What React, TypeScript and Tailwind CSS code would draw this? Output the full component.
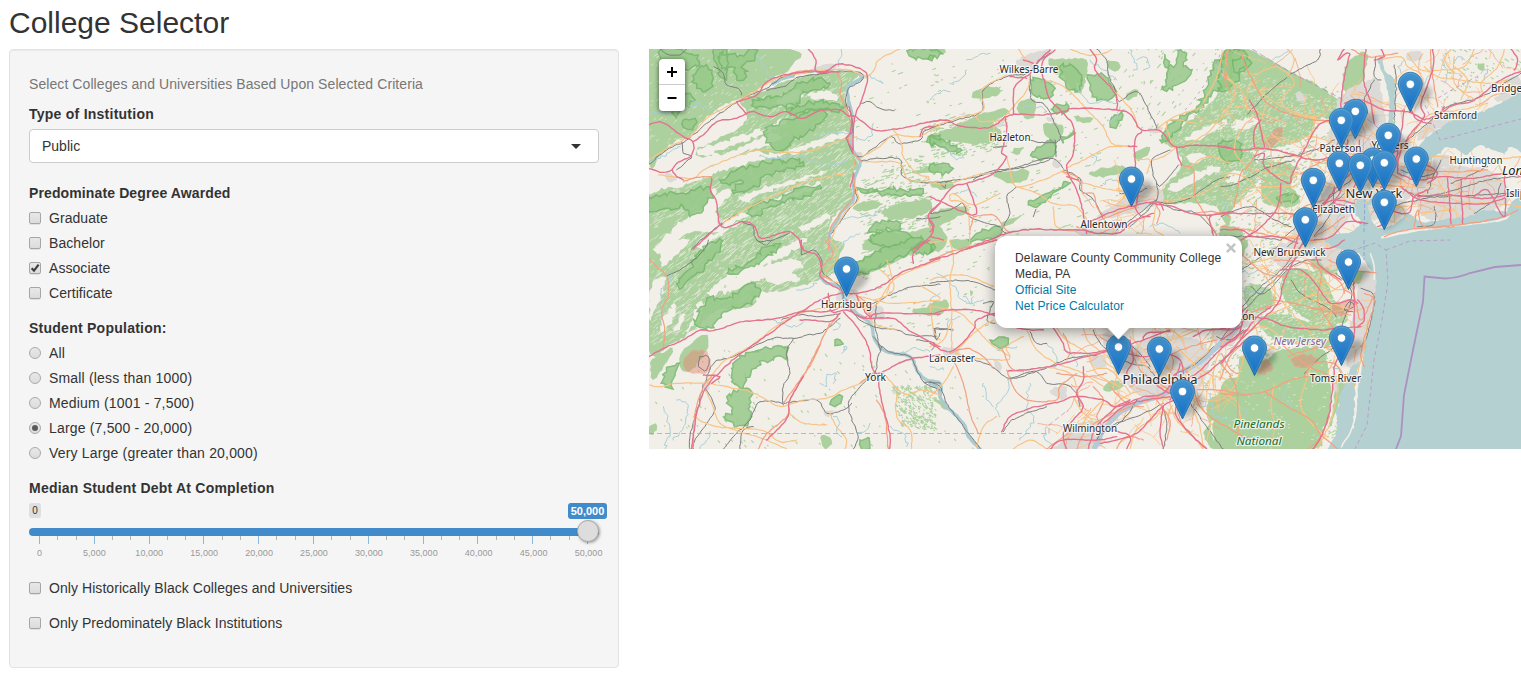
import React from "react";

type Pt = [number, number];
type Tile = {
  x: number;
  y: number;
  forest?: string[];
  clear?: string[];
  park?: string[];
  urban?: string[];
  zone?: string[];
  river?: string[];
  stream?: string[];
  rail?: string[];
  primary?: string[];
  trunk?: string[];
  motorway?: string[];
};

function rng(seed: number) {
  let s = seed >>> 0;
  return () => {
    s = (s * 1664525 + 1013904223) >>> 0;
    return s / 4294967296;
  };
}

const parse = (s: string): Pt[] => s.trim().split(/\s+/).map((q) => q.split(",").map(Number) as Pt);

// Spline through the points with a slight deterministic wobble, for surveyed-looking lines.
function trace(src: string, jitter: number, closed = false) {
  const p = parse(src);
  const n = p.length;
  const rand = rng(Math.round(p[0][0] * 31 + p[0][1] * 17 + n * 101));
  const at = (i: number) => (closed ? p[(i + n) % n] : p[Math.max(0, Math.min(n - 1, i))]);
  let d = `M${p[0][0]},${p[0][1]}`;
  const segs = closed ? n : n - 1;
  for (let i = 0; i < segs; i++) {
    const [a, b, c, e] = [at(i - 1), at(i), at(i + 1), at(i + 2)];
    const len = Math.hypot(c[0] - b[0], c[1] - b[1]);
    const steps = Math.max(1, Math.round(len / 9));
    for (let k = 1; k <= steps; k++) {
      const t = k / steps;
      const f = (j: 0 | 1) =>
        0.5 * (2 * b[j] + (c[j] - a[j]) * t + (2 * a[j] - 5 * b[j] + 4 * c[j] - e[j]) * t * t + (3 * b[j] - a[j] - 3 * c[j] + e[j]) * t * t * t);
      const w = k === steps ? 0 : jitter;
      d += `L${(f(0) + (rand() - 0.5) * w).toFixed(1)},${(f(1) + (rand() - 0.5) * w).toFixed(1)}`;
    }
  }
  return closed ? d + "Z" : d;
}

function inside(x: number, y: number, poly: Pt[]) {
  let hit = false;
  for (let i = 0, j = poly.length - 1; i < poly.length; j = i++) {
    const [xi, yi] = poly[i];
    const [xj, yj] = poly[j];
    if (yi > y !== yj > y && x < ((xj - xi) * (y - yi)) / (yj - yi) + xi) hit = !hit;
  }
  return hit;
}

// Short slanted dashes scattered through an area.
function scatter(area: string, count: number, angle: number, maxLen: number, seed: number) {
  const poly = parse(area);
  const xs = poly.map((q) => q[0]);
  const ys = poly.map((q) => q[1]);
  const [x0, x1, y0, y1] = [Math.min(...xs), Math.max(...xs), Math.min(...ys), Math.max(...ys)];
  const rand = rng(seed);
  const c = Math.cos((angle * Math.PI) / 180);
  const s = Math.sin((angle * Math.PI) / 180);
  let d = "";
  for (let i = 0; i < count; i++) {
    const x = x0 + rand() * (x1 - x0);
    const y = y0 + rand() * (y1 - y0);
    const l = 1.5 + rand() * rand() * maxLen;
    if (inside(x, y, poly)) d += `M${x.toFixed(1)},${y.toFixed(1)}l${(c * l).toFixed(1)},${(s * l).toFixed(1)}`;
  }
  return d;
}

// Meandering local roads around a metropolitan centre.
function streets(cx: number, cy: number, rx: number, ry: number, count: number, seed: number) {
  const rand = rng(seed);
  let d = "";
  for (let i = 0; i < count; i++) {
    const a = rand() * Math.PI * 2;
    const r = Math.sqrt(rand());
    let x = cx + Math.cos(a) * r * rx;
    let y = cy + Math.sin(a) * r * ry;
    let h = rand() * Math.PI * 2;
    d += `M${x.toFixed(1)},${y.toFixed(1)}`;
    const steps = 4 + Math.floor(rand() * 8);
    for (let k = 0; k < steps; k++) {
      h += (rand() - 0.5) * 0.8;
      x += Math.cos(h) * 3.4;
      y += Math.sin(h) * 3.4;
      d += `L${x.toFixed(1)},${y.toFixed(1)}`;
    }
  }
  return d;
}

const tiles: Tile[] = [
  {
    x: 640,
    y: 40,
    forest: [
      "27,27 450,27 450,85 400,115 330,165 300,175 240,200 190,245 150,290 110,300 60,345 27,370",
      "300,185 380,150 450,120 560,98 655,98 620,140 618,200 632,240 630,290 640,330 655,370 632,420 636,480 590,520 565,570 566,632 150,632 170,600 240,545 220,500 230,450 190,440 150,420 180,390 260,350 180,350 170,330 240,290 300,260 320,215",
      "27,470 60,440 110,445 150,430 210,430 200,490 150,540 60,632 27,632",
      "730,510 800,485 870,480 860,520 760,540",
      "640,500 680,485 730,490 690,510 650,512",
      "820,390 900,378 900,392 830,402",
      "680,600 740,570 790,580 900,560 900,632 690,632",
    ],
    clear: [
      "170,300 230,262 300,232 320,240 260,280 200,315",
      "170,330 250,305 380,262 430,235 440,250 360,285 250,330 190,345",
      "200,355 280,330 400,280 420,300 300,340 230,370 150,410 140,395",
      "130,415 210,380 330,335 400,340 500,310 620,275 620,290 480,335 400,352 320,372 220,400 160,425",
      "410,180 470,150 490,165 440,195 420,200",
      "500,165 560,150 600,175 560,180",
      "27,440 90,395 120,425 60,450 27,460",
      "40,630 110,555 190,500 250,450 275,460 240,500 140,580 80,632",
      "200,560 280,530 420,470 540,425 545,435 420,485 300,540 230,575",
      "300,470 400,435 520,405 560,395 480,425 380,455 320,485",
      "170,610 260,565 300,552 230,595 200,625",
      "480,560 560,520 570,530 510,570",
    ],
    park: [
      "60,60 70,27 110,27 140,40 175,45 170,80 110,85 65,80",
      "160,110 190,80 215,100 215,130 195,155 170,145",
      "240,40 300,45 340,27 345,55 310,75 320,110 290,120 275,80 245,85",
      "220,30 250,27 260,100 240,110",
      "340,190 380,170 430,165 480,130 540,115 570,130 540,150 490,155 470,190 400,200 350,205",
      "440,215 500,190 560,185 620,200 600,210 520,212 470,222",
      "370,275 420,245 480,225 540,205 560,225 540,250 500,280 460,300 430,330 400,325 380,300",
      "240,420 290,390 360,370 430,362 490,365 480,380 420,395 370,410 350,440 300,455 275,450 310,425 260,430",
      "27,480 60,470 90,455 130,460 200,440 215,460 190,500 150,530 130,500 90,505 60,510 27,515",
      "320,520 340,495 400,480 460,455 540,435 545,445 490,470 440,480 390,500 350,525",
      "640,445 700,450 760,448 850,453 850,460 740,462 650,452",
      "690,565 720,550 770,542 780,560 735,570 700,575",
      "690,590 740,570 790,575 820,600 810,620 750,622 700,612",
      "800,30 890,28 895,50 850,58 805,42",
      "865,290 900,285 900,310 870,308",
      "85,175 150,160 160,185 120,205 110,235 85,210",
      "130,240 165,235 160,260 130,262",
    ],
    urban: ["520,85 560,72 590,78 570,92 530,98", "75,400 95,402 110,420 85,425", "385,120 400,118 408,132 395,138", "640,340 660,335 668,350 650,362", "232,540 250,538 252,558 238,560", "665,100 690,105 680,118 668,112"],
    river: ["400,130 430,115 460,108", "655,100 665,115 625,140 625,180 637,230 635,320 655,355 660,372 642,420 640,480 610,510 580,560 568,590 572,630"],
    stream: [
      "603,27 600,55 595,80",
      "350,50 375,80 380,100 410,125",
      "150,180 180,195 240,220",
      "27,220 110,210 180,190",
      "690,105 710,120 730,130 720,122",
      "530,290 570,275 620,280 650,240",
      "590,630 630,590 660,580",
      "600,550 640,530 680,530 725,510",
      "360,350 420,355 480,350 560,370 620,360",
      "650,300 690,290 700,250",
      "27,370 80,340 120,320",
    ],
    rail: [
      "27,372 80,330 140,300 200,250 270,200 330,165 380,145 430,110 500,98 560,95 660,97 662,125 625,145 618,190 635,235 635,280 620,290 640,340 668,350",
      "140,27 120,45 80,42 60,27",
      "222,80 250,100 260,135 295,145 305,165",
      "665,190 690,185 720,205 762,212",
      "125,305 130,340 155,350 110,390",
      "668,350 700,325 755,290 775,310 840,300 850,275 900,255",
      "665,362 720,355 780,358 790,410 850,428 870,425",
      "155,627 190,595 240,555 290,522",
      "310,548 340,560 350,600 400,600 450,578",
      "645,360 640,420 650,480 625,510 590,560 575,580",
      "830,535 870,535 900,530",
      "380,150 430,140 480,110 560,100",
    ],
    primary: [
      "120,298 150,290 200,235 280,190 320,168 400,120 450,105 560,90 630,90 680,110 705,85 715,60 780,27",
      "55,405 100,410 160,415 200,385 300,345 360,330 440,338 520,330 600,300 650,290",
      "250,550 330,500 420,460 500,425 620,400 640,403",
      "668,350 720,320 760,285 830,290 900,255",
      "760,270 785,310 790,350 830,400 865,410 850,425 800,415 780,370 720,365 665,365",
      "865,425 900,430",
      "645,360 640,420 655,480 620,510 590,560 572,600",
      "27,360 80,325 130,300",
    ],
    trunk: ["590,95 605,130 600,160 615,200 635,260 625,300 650,350 665,365", "640,400 640,470 600,520 570,570 566,630", "215,410 170,412 130,425", "300,180 330,165", "430,110 470,95 520,90"],
    motorway: [
      "27,255 60,245 95,265 130,290 158,305 155,345 110,370 95,390 60,397 27,385",
      "158,305 190,285 230,245 290,235 335,215 390,230 440,215 485,235 540,212 600,210 625,228 645,228",
      "290,185 300,200 320,222",
      "505,27 528,60 530,95 600,95",
      "290,185 350,165 375,130 420,108 500,95 560,92 600,72 680,100 665,180 648,220 640,270 638,340",
      "645,228 680,255 710,272 780,265 850,250 900,240",
      "627,200 635,230 630,280 618,295 640,330",
      "97,390 110,410 130,420",
      "215,415 212,455 228,480 245,560 310,545 345,560 365,595 440,575 470,590 490,627",
      "160,627 200,590 245,550",
      "840,290 850,265 880,260",
      "900,490 865,525 880,570 860,600 820,627",
      "640,400 632,440",
    ],
  },
  {
    x: 640,
    y: 240,
    forest: [
      "27,0 560,0 600,40 560,110 440,150 360,160 340,195 300,205 230,210 160,270 100,310 27,330",
      "130,330 190,285 205,310 190,350 150,395 120,380",
      "30,370 60,340 100,325 70,380 40,420",
      "560,90 660,60 780,0 880,0 760,70 640,110",
      "27,560 50,555 40,585 27,580",
      "820,205 900,210 900,225 830,220",
      "545,585 575,600 560,627 545,610",
    ],
    clear: [
      "200,160 260,110 380,50 470,0 500,0 430,50 300,110 230,165",
      "60,40 110,0 150,0 100,50 70,80",
      "150,250 175,190 190,195 170,250 130,280",
      "270,120 350,85 440,60 490,80 400,105 330,130 250,160",
      "30,150 60,110 80,115 50,200 30,240",
      "100,270 130,220 140,225 120,270",
      "370,100 440,90 480,120 400,130",
      "60,260 100,190 110,200 80,270",
    ],
    park: [
      "110,130 150,85 175,40 215,5 250,0 240,30 205,60 190,95 150,115 125,145",
      "165,250 200,180 260,175 300,150 345,130 360,160 320,190 260,215 200,270",
      "265,95 330,65 380,20 420,10 410,30 350,70 300,95",
      "620,90 700,40 800,0 850,0 760,60 670,100",
      "815,30 830,15 880,10 880,30 850,45",
      "70,430 80,395 110,370 105,400 90,445",
      "275,385 300,355 340,335 400,320 435,320 440,350 400,360 350,380 320,420 310,445 275,425",
      "260,470 330,450 330,500 325,550 290,560 255,530 275,510",
      "570,490 600,465 605,480 585,500",
      "660,600 690,595 690,627 665,627",
      "585,300 600,300 600,315 585,312",
    ],
    urban: ["600,150 650,150 660,200 620,210 590,180", "680,400 720,395 730,420 690,420", "750,450 770,455 760,465", "190,430 205,420 210,445 195,450", "685,205 730,205 730,240 690,235", "550,515 580,510 575,525 555,527"],
    zone: ["130,370 150,340 200,335 210,370 200,395 160,400 140,390"],
    river: ["540,110 560,130 600,140 615,180 650,220 690,250 705,300 740,335 810,350 830,390 860,420 900,430 900,470"],
    stream: [
      "60,240 70,190 60,160 90,120 80,100",
      "70,500 90,560 80,600 75,627",
      "110,480 140,490 130,560 100,600",
      "540,430 560,440 560,410 590,400 580,430",
      "210,575 200,600 180,627",
      "400,240 470,260 490,245",
      "780,340 830,325 870,335",
      "580,240 600,260 580,270",
      "750,560 790,580 800,620",
      "470,150 500,145 530,130",
      "610,330 620,320 605,340",
      "580,530 600,550 590,570 605,590",
      "690,550 680,570 650,575",
    ],
    rail: [
      "80,108 120,90 160,60 195,25 205,0",
      "350,0 380,15 395,0",
      "485,0 485,45 520,30 545,60 550,100 600,140 610,180",
      "195,430 205,400 225,365 280,350 330,325 400,295 460,295 500,285 540,280 570,260 600,235",
      "460,295 440,340 450,400 430,440 430,495",
      "425,240 480,225 540,230 600,220",
      "620,190 650,230 700,260 770,270 810,285 890,290",
      "660,200 700,190 760,160 820,140 900,133",
      "710,190 705,250 712,290 720,330",
      "700,290 745,335 810,350 830,390 855,430 900,450",
      "725,320 710,370 705,400 660,440 625,490 640,550 655,590 640,627",
      "195,445 225,500 200,550 165,600 160,627",
      "430,490 360,485 330,540 280,590 250,627",
      "430,490 530,480 560,520 610,510 635,490",
      "875,330 885,310 830,300",
      "190,430 175,500 150,590 150,627",
      "300,627 310,570 340,560",
      "180,350 205,350 200,390 175,380 180,350",
      "900,430 850,425",
      "885,270 890,300 900,280",
    ],
    primary: [
      "27,435 60,440 110,430 190,430 230,435 330,455 380,480 425,500 490,480 560,475 610,450 660,430 690,405",
      "200,430 250,365 330,320 400,265 480,220 580,200",
      "195,450 215,490 240,550 300,575 380,600 440,627",
      "620,200 700,200 760,120 830,85 900,60",
      "740,60 760,150 700,180",
      "660,170 760,190 900,180",
      "840,135 880,160 900,175",
      "450,520 490,550 560,555",
      "730,400 790,460 850,450 900,465",
      "770,460 770,530 810,570 815,627",
      "160,530 230,560 360,570 420,605 470,600",
      "570,520 590,560 620,600 615,627",
      "870,190 880,270 900,300",
      "650,170 690,210 700,250 770,270",
      "720,90 750,120 740,160",
      "570,0 590,30 590,60 560,90 560,115 600,130",
    ],
    trunk: [
      "27,55 50,80 80,108 85,170 65,210 75,280 70,330",
      "555,0 580,40 555,70 540,100 575,120",
      "600,220 555,280 520,360 480,420 430,490",
      "215,410 190,440 165,520 160,600 155,627",
      "355,627 380,580 440,530 450,480 490,410 510,370 570,250",
      "710,480 735,530 745,627",
      "660,430 700,400",
      "640,160 680,190 690,240",
    ],
    motorway: [
      "27,350 70,325 120,305 180,270 220,272 310,245 400,237 480,215 540,180 600,160 650,160 720,140 780,100 860,70 900,55",
      "160,590 170,520 200,440 250,385 310,335 390,280 430,250 490,215 560,215 610,200",
      "480,0 490,30 530,45 545,85 540,110 600,150",
      "610,215 650,260 685,320 695,380 710,400 740,390 800,360 900,345",
      "620,180 640,220 680,235 760,235 800,265 850,295 900,320",
      "600,220 570,245 510,240 480,240",
      "715,410 720,460 735,520 750,590 748,627",
      "650,165 665,200 690,230 720,220 900,222",
      "820,70 820,40 860,5 870,0",
      "380,600 440,535 450,480 490,410",
      "155,627 160,590",
      "565,160 575,215 620,210 660,230 680,230",
      "190,405 240,410 215,430",
    ],
  },
  {
    x: 930,
    y: 40,
    forest: [
      "0,30 45,28 40,42 0,38",
      "0,285 70,260 150,225 225,205 230,225 190,245 215,280 180,310 110,310 40,300 0,305",
      "355,60 400,55 470,60 470,105 450,160 420,140 400,105 370,100",
      "700,300 780,240 850,180 900,130 900,540 860,500 790,490 700,490 690,460 740,400 755,370 740,330",
      "0,520 90,500 110,515 40,550 0,560",
      "480,395 575,375 575,400 500,412",
      "265,190 315,180 310,235 270,225",
      "140,150 200,140 205,165 130,175",
      "610,340 650,320 660,330 625,365",
      "0,430 55,420 75,440 30,450",
      "430,230 490,235 460,250",
      "535,60 570,75 555,95 535,85",
      "280,320 260,345 240,335",
      "345,250 400,260 380,310 350,290",
      "190,400 290,390 290,420 240,430",
      "590,160 625,150 620,170 590,180",
      "200,560 280,520 250,550",
    ],
    clear: ["720,440 790,400 850,380 870,390 800,420 730,455", "760,300 830,260 890,240 880,260 800,300", "760,350 800,340 830,350 790,370"],
    park: [
      "480,105 510,102 540,130 560,155 545,175 500,172 480,150",
      "300,120 360,130 370,165 340,175 310,165",
      "690,300 740,240 800,200 850,90 880,40 900,35 900,130 850,150 820,190 770,240 720,300",
      "300,345 340,315 370,305 375,335 350,355 310,352",
      "390,80 420,75 455,105 450,150 420,150 400,120",
      "0,290 40,300 90,325 80,340 40,320 0,310",
      "295,495 340,465 410,425 420,430 360,470 310,500",
      "115,600 140,580 215,565 200,590 120,608",
      "540,245 575,215 575,240 545,262",
      "705,45 715,80 740,70 740,30 770,40 760,80 780,90 750,130 700,150 710,100",
      "370,205 410,190 415,212 380,222",
      "0,45 12,48 5,62 0,60",
      "395,300 430,275 420,290 400,310",
      "875,330 900,315 900,345 880,350",
      "0,375 60,380 55,400 0,395",
    ],
    urban: [
      "260,60 310,40 370,30 330,65 300,90 260,110",
      "195,245 225,240 215,260 200,262",
      "610,450 680,440 700,480 640,510 560,530 500,530 560,490",
      "450,560 540,550 560,585 450,585",
      "85,225 105,215 100,228",
      "370,360 390,365 385,385 370,380",
      "350,230 375,232 370,245 355,245",
      "655,265 700,262 690,278 660,278",
    ],
    stream: [
      "110,60 160,40 180,40",
      "0,180 40,150 60,155",
      "280,205 330,200 350,215",
      "570,200 560,230 540,250",
      "440,130 480,190 520,180 560,190",
      "620,60 640,50 660,80 640,90",
      "480,340 500,350 490,375",
      "660,560 700,550 750,580",
      "60,330 80,360 110,330",
      "480,60 520,90 560,120",
      "860,80 880,100 860,120",
      "600,30 620,70 610,90",
      "520,430 560,420 580,440",
      "90,460 120,450 140,470",
      "230,310 250,300",
      "60,130 90,120 110,90",
    ],
    rail: [
      "0,265 80,240 155,215 160,150 230,110 290,100 330,60 360,40",
      "500,27 530,60 535,105 555,150 568,185 620,155 660,220 680,265",
      "0,430 80,420 160,405 250,385 360,355 400,385",
      "300,100 305,180 340,190 370,240 390,300 330,308 290,295",
      "375,300 378,350",
      "260,440 230,470 240,520 215,570 230,580",
      "0,520 60,510 100,490 120,530 210,560",
      "400,390 450,415 450,450 490,480 525,545",
      "670,485 720,490 780,475 850,425 900,410",
      "745,375 700,430 680,430 665,360 720,330",
      "680,430 680,480 600,560",
      "130,420 180,395 290,380 360,358",
      "30,430 45,445 50,425",
      "310,530 318,508",
      "690,490 740,510 800,520 850,570 860,585",
      "560,570 600,540 680,480",
      "570,460 620,460 650,445",
      "190,322 230,318",
    ],
    primary: [
      "0,262 80,235 160,210 155,150 230,105",
      "265,27 290,60 310,80",
      "340,120 380,130 420,155 480,220 520,260 545,310 600,320 540,320 480,350 410,385",
      "420,27 470,45 520,40 545,27",
      "530,130 570,170 610,220 620,260",
      "300,100 290,150 250,200 225,230",
      "0,430 60,430 140,405 180,400",
      "230,350 240,390 260,440 340,420 400,390",
      "260,440 320,460 370,490 440,500 470,540",
      "395,395 440,420 500,440 580,455",
      "565,490 590,455 560,420",
      "730,320 710,250 760,220 820,200",
      "665,360 700,350 740,320",
      "620,360 660,360 650,400",
      "770,390 830,350 900,370",
      "660,490 720,480 790,470 850,440 900,400",
      "120,627 110,500 60,480 70,460 130,495 210,460",
      "680,270 720,240 800,250",
      "370,500 380,560 440,575",
      "190,240 195,290 230,300",
      "545,580 560,550 570,510 600,500",
      "760,320 830,280 870,235 900,225",
      "560,445 600,470 610,490 570,500",
      "140,225 150,245 230,238",
      "820,190 860,110 880,35",
      "680,490 670,560 700,585",
      "50,600 0,610",
    ],
    trunk: [
      "130,530 190,525 220,560 240,580",
      "750,375 790,390 795,470 830,530 860,585",
      "890,35 885,120 900,150",
      "455,420 460,460 490,460 500,500 525,530",
      "400,395 440,410 450,430",
      "500,545 560,520 620,500",
      "130,530 120,570",
      "440,560 500,580 560,560",
      "790,520 850,515 900,530",
      "0,560 10,575 0,590",
      "675,490 690,520 680,550",
    ],
    motorway: [
      "0,245 50,240 90,258 180,262 240,225 330,225 395,215 440,205 560,210 600,222 635,270 690,272 735,320 800,315 900,322",
      "375,30 340,60 335,95 350,150 360,180 395,215 430,260 430,340 410,385 440,450 460,520 470,580",
      "360,30 320,70 300,100 255,140 250,220",
      "480,27 500,60 495,90 555,160 560,210",
      "635,275 615,300 615,360 625,430 620,490",
      "225,230 230,280 215,340 230,350 190,400 110,430 70,440 20,500 0,520",
      "0,590 40,600",
      "740,320 745,355 755,375",
      "410,410 445,420",
      "660,490 730,500 780,520 840,525 900,515",
      "480,545 560,510 620,495 660,487 690,487",
      "110,430 130,480 130,525 0,470",
      "110,627 230,580 310,568 380,570 460,570 500,580 570,578 600,550 670,520",
      "280,60 310,70",
      "240,110 290,115",
      "615,500 630,525 660,530",
      "690,490 700,510",
      "0,540 12,560 0,575",
      "850,585 840,530 890,520",
      "595,318 620,320",
    ],
  },
  {
    x: 930,
    y: 240,
    forest: [
      "60,0 120,0 110,25 70,25",
      "0,190 50,180 50,210 0,225",
      "830,500 850,470 940,450 960,460 960,627 900,627 850,600 840,550",
      "10,480 50,490 50,510",
      "545,420 580,430 560,450 520,450",
      "860,540 820,580 850,627 900,627",
      "120,150 130,155 122,168",
    ],
    park: ["0,15 12,10 8,32 0,38", "180,300 235,295 235,312 200,318"],
    urban: [
      "640,300 760,290 830,320 830,400 780,470 700,480 640,470 590,430 580,360",
      "520,280 570,300 580,350 540,370",
      "40,320 85,330 80,360 45,355",
      "420,560 510,545 500,627 370,627 400,600",
      "360,450 410,440 400,480",
      "190,360 215,375 205,400",
      "480,350 520,345 530,380 490,380",
      "850,270 930,260 920,300 860,310",
    ],
    river: ["0,430 20,440 35,480 60,510 100,550 115,590 150,627"],
    stream: [
      "240,410 230,460 200,500 210,530",
      "160,430 170,480 190,500",
      "350,310 380,350 370,380",
      "20,100 60,130 110,190 130,170",
      "50,270 60,240 90,230",
      "300,430 290,500 310,540 270,600",
      "400,330 430,350 440,380",
      "550,280 560,320",
      "100,170 130,190 160,180",
      "0,380 40,390",
      "840,460 850,520 900,540",
      "0,180 30,160",
      "350,560 345,600 380,610",
      "790,480 820,500 840,490",
      "200,330 260,320",
    ],
    rail: [
      "0,130 60,122 130,125 195,150",
      "10,265 70,270 15,265 20,300",
      "135,360 180,375 240,415 330,390 420,355 500,345",
      "240,415 320,395 350,430 410,435 440,460 450,500",
      "0,425 30,440 50,490 100,560 150,625",
      "220,575 240,545 280,525 350,500",
      "160,190 190,185 170,240 195,250",
      "300,275 320,310 350,310",
      "490,270 520,320 600,370 650,380 690,430",
      "700,490 640,520 540,560 500,600",
      "780,490 830,560 880,627",
      "700,500 710,560 700,627",
      "570,290 620,330 660,380",
      "850,320 800,370 740,400",
      "620,480 580,540 520,580",
      "940,270 900,300 860,290",
    ],
    primary: [
      "60,0 70,60 60,120 65,230 65,330",
      "0,120 60,105 120,110 190,140",
      "75,340 130,280 190,240",
      "0,320 40,300 65,240",
      "75,340 140,355 220,360 240,350 180,310 90,220 0,200",
      "0,470 40,430 70,380",
      "140,620 160,560 200,530",
      "290,270 320,330 380,370 460,400 520,440",
      "380,265 410,300 470,340 500,400 570,440",
      "460,265 480,310 550,360",
      "470,395 530,385 570,420 600,460",
      "520,480 480,520 450,560 400,600",
      "240,345 230,320 280,290",
      "640,300 620,340 660,390 700,400",
      "600,290 650,340 700,380 760,390",
      "720,490 740,540 790,590 820,627",
      "660,300 720,300 800,270",
      "810,400 820,450 790,500 810,560 820,627",
      "740,320 780,360 830,400 900,420",
      "850,290 830,340 790,370 760,430",
      "900,270 870,330 850,400 850,450",
      "530,550 570,480 640,450",
      "520,360 560,400 550,450 600,480",
      "430,470 460,520 500,540",
      "700,260 750,290 770,340",
      "640,490 680,470 720,480",
      "600,627 620,570 680,530 700,480",
      "350,380 420,400 440,440",
      "800,490 840,540 830,600",
      "250,627 300,600 350,627",
    ],
    trunk: [
      "70,360 100,430 120,520 145,580",
      "0,60 80,30 200,0",
      "230,390 250,440 290,480 380,480 390,440 440,400",
      "215,320 240,380 280,395",
      "600,330 640,400 700,440 740,470",
      "640,360 700,350 780,320 860,300",
      "800,450 860,450 960,465",
      "760,380 790,430 800,480 840,530 960,600",
      "400,280 420,330 410,360",
      "380,400 470,410 530,400",
      "540,440 590,490 640,500",
      "700,300 730,360 720,400",
      "350,627 400,590 440,560",
      "440,627 470,570 530,530 600,500",
      "740,500 760,560 830,627",
      "870,420 900,350 950,300",
      "600,440 660,420 720,450",
      "510,290 550,310 600,300",
      "490,440 520,480 500,530 520,560",
      "680,480 720,540 710,600",
      "190,385 160,350 110,325 60,340",
      "560,627 590,590 640,600",
    ],
    motorway: [
      "0,60 60,45 130,20 200,0",
      "0,222 60,210 130,210 190,225 270,265 340,270",
      "0,310 50,335 85,320 130,270 140,240 195,220",
      "235,393 320,385 400,370 470,350 560,325 640,300 720,270",
      "215,575 240,530 300,505 390,485 440,470 520,480 560,500 640,470 700,460 740,400",
      "370,265 400,310 410,335 470,340 540,330",
      "600,300 610,360 590,400 620,430",
      "460,380 460,420 440,460 460,500 430,540 400,580 410,627",
      "510,610 560,600 620,580 660,540 710,490 760,480",
      "740,480 740,530 790,590 830,627",
      "720,480 750,430 800,400 850,350 890,310 950,270",
      "510,560 580,500 650,480 720,470",
      "640,400 700,450 720,460",
      "720,440 770,430 830,400 900,340 960,290",
      "475,627 500,560 560,500 600,480",
      "590,340 640,350 700,340 750,360 760,400",
      "550,570 600,590 590,627",
      "790,290 830,270 900,270",
      "700,500 690,570 700,627",
      "360,627 400,600 500,600 560,590",
      "750,370 740,400 700,430",
      "640,300 650,280 720,275",
    ],
  },
  {
    x: 1221,
    y: 40,
    forest: [
      "0,50 80,27 110,40 200,90 280,130 340,170 360,190 340,230 290,240 260,290 180,320 100,330 0,300",
      "365,120 385,60 430,35 440,60 420,130 380,160",
      "0,320 60,330 100,345 110,420 60,480 20,520 0,520",
      "110,370 180,360 220,380 210,440 240,470 210,500 130,490 120,430",
      "510,270 520,240 530,290 515,330",
      "735,310 760,320 750,330 735,325",
      "0,560 60,570 50,627 0,627",
      "800,310 820,310 815,325",
      "770,70 790,70 790,90 775,90",
    ],
    clear: ["30,250 90,230 120,240 90,260 40,270", "140,350 200,340 220,350 160,365", "20,400 60,390 60,420 20,430"],
    park: [
      "0,60 40,27 85,60 70,90 40,130 0,155",
      "170,470 220,460 222,485 180,490",
      "0,310 50,305 60,345 20,370 0,350",
      "35,70 60,50 75,75 50,105",
    ],
    urban: [
      "360,170 420,130 470,120 490,210 500,260 540,280 560,320 590,360 590,440 540,500 490,530 440,540 430,480 380,540 330,590 250,620 200,600 250,540 300,470 330,400 320,300 340,230",
      "590,400 680,380 800,390 860,440 860,490 760,530 640,540 590,500",
      "630,240 700,215 690,255 650,265 600,300 590,290",
      "820,180 900,120 900,170",
      "640,350 700,350 690,380 640,380",
      "560,40 600,35 600,60 565,62",
      "225,160 260,170 250,185 228,180",
      "850,120 890,110 895,140",
    ],
    zone: ["135,310 160,270 185,262 180,290 145,325"],
    stream: [
      "155,60 190,40 200,27",
      "20,330 40,300 60,290",
      "190,200 200,230 180,250",
      "380,470 360,520 340,560",
      "660,60 680,100 670,130",
      "700,70 710,50 730,60",
      "780,100 800,90 790,120",
      "0,480 20,500 10,530",
      "630,80 620,110 600,140",
      "390,280 400,300 380,340",
      "550,60 530,80 540,100",
    ],
    rail: [
      "80,222 100,200 150,150 200,110 250,80 290,60 298,27",
      "520,75 525,130 520,240",
      "465,50 460,110 480,120",
      "100,360 200,350 280,330 340,300",
      "0,440 50,430 150,380 220,360",
      "0,530 90,500 160,540 210,560",
      "560,300 620,250 680,200 780,170 900,100",
      "500,500 590,480 700,450 800,420 900,410",
      "540,390 600,410 640,400",
      "760,520 820,480 840,430",
      "640,500 640,550 590,560",
      "460,120 430,180 440,220",
      "180,600 250,540 330,470 400,410",
      "690,430 760,400 800,380",
      "550,450 620,470 860,460",
      "200,620 300,520 370,460",
      "340,440 330,520 280,590",
      "0,590 100,590 180,600",
      "660,360 640,400 620,460",
    ],
    primary: [
      "20,27 15,100 60,150 80,210",
      "70,100 110,100 160,80 200,100 220,130 180,180 200,210 260,230 320,220",
      "90,130 150,180 230,220 330,250",
      "100,230 60,270 40,330 80,380 150,400 250,400",
      "0,210 60,200 120,220 200,250",
      "200,27 220,60 200,110",
      "610,80 650,110 720,120 800,130 860,120",
      "700,50 700,130 760,180",
      "560,40 600,90 660,90 730,80 760,27",
      "480,60 540,50 560,80 600,100",
      "850,27 830,80 780,130 790,170",
      "150,280 200,310 270,290 340,310",
      "0,400 70,410 130,470 200,520 250,530",
      "60,500 70,450 130,440 220,440",
      "590,370 640,350 760,360 900,350",
      "650,420 700,480 820,490 900,500",
      "440,180 430,240 470,300 480,340",
      "240,310 270,360 330,370 410,360",
      "380,400 410,430 500,440 590,440",
      "100,540 150,580 220,590 270,560",
      "520,120 560,180 540,220",
      "270,400 320,430 370,440",
      "480,520 540,500 560,540 600,520 700,510",
      "0,100 40,140 30,190 0,230",
      "600,240 640,220 720,210 800,190",
      "690,27 670,60 700,100",
      "140,180 120,260 150,330 150,400",
      "270,190 280,250 260,300",
      "340,320 380,340 440,340",
      "720,180 740,120 700,80",
      "830,360 850,400 900,390",
    ],
    trunk: [
      "20,27 20,80 15,120",
      "40,500 60,400 80,380 110,330",
      "60,27 70,70 110,150 140,190 200,220 280,240 360,240",
      "390,27 440,50 500,45 530,40",
      "630,27 630,80 640,140 650,200",
      "540,380 600,390 700,395 800,390",
      "490,590 530,575 600,565 700,555 780,545 850,530 890,510",
      "360,300 400,330 450,340 480,380",
      "400,480 440,470 470,510",
      "280,590 330,560 370,530",
      "200,540 250,500 310,480",
      "0,560 80,570 160,590 280,600",
      "590,260 540,330 520,360",
      "440,420 500,400 560,430",
      "240,400 320,360 400,380",
      "580,560 590,510 610,560 700,560",
      "430,400 470,430 550,440",
    ],
    motorway: [
      "0,320 60,330 130,325 220,345 280,360 350,350 400,350",
      "85,180 110,230 130,320",
      "370,27 350,60 385,40 370,110 360,200 370,250 345,320",
      "435,27 430,70 430,130 450,190 460,250",
      "370,190 420,180 490,210 560,215 610,240",
      "635,27 635,90 600,190 610,230 570,280 540,330 530,380",
      "655,220 700,195 750,185 800,150 840,120 880,100 900,95",
      "610,240 650,225 670,200",
      "570,210 590,240 630,250",
      "550,210 540,280 530,330 530,400",
      "100,350 130,340 130,380 200,430 215,400 260,310 300,250 360,240",
      "0,520 80,520 180,520 250,520 300,500 340,480 400,490",
      "250,560 300,500 350,440 400,390 460,350",
      "220,627 240,560 270,510 300,440",
      "530,400 590,420 660,410 750,415 850,400 900,410",
      "540,440 600,480 700,490 800,490 880,460",
      "680,410 690,550",
      "720,420 725,550",
      "850,390 850,530 800,450 760,470",
      "590,470 680,465 800,475 900,450",
      "480,440 500,500 560,520 580,470 620,450",
      "400,350 420,400 400,440 380,470",
      "430,340 480,350 530,330",
      "340,400 360,450 340,490 380,500 400,540 440,550",
      "0,570 60,570 100,590 170,590 230,610",
      "280,600 330,590 380,545 420,550",
      "480,27 490,50 460,60",
      "120,240 100,270 100,320",
      "560,390 600,370 650,400 620,430",
      "380,300 370,350 330,350",
      "415,300 420,350 430,400",
      "470,560 490,545 480,520",
      "870,27 890,60 880,90",
      "180,430 170,500 120,560 60,600",
    ],
  },
  {
    x: 1221,
    y: 240,
    forest: [
      "0,0 80,0 60,60 40,160 0,170",
      "180,330 300,325 320,380 330,440 325,520 300,580 280,627 0,627 0,440 50,410 60,350 130,360",
      "110,240 180,220 240,240 330,260 320,320 220,310 150,290",
      "200,90 300,100 330,160 380,240 300,250 220,210 180,150",
      "380,90 450,100 440,130 400,125",
      "340,430 380,430 350,500 325,560 340,480",
      "85,130 150,150 160,190 100,220 70,180",
      "330,250 380,280 330,290",
      "270,60 330,60 350,100 290,100",
    ],
    clear: [],
    park: [],
    urban: [
      "150,20 330,0 360,60 330,90 260,50 180,80",
      "430,100 470,100 460,180 440,260 430,320 400,360 370,340 400,200 410,150",
      "60,220 100,215 110,245 60,260",
      "380,320 420,320 420,370 380,380",
      "0,260 60,260 40,310 0,320",
      "330,440 350,430 350,460",
    ],
    zone: ["335,195 380,180 400,185 385,215 345,225", "210,360 240,345 290,355 260,380 230,380", "105,380 140,360 155,385 120,400"],
    stream: ["60,150 100,160 130,150", "160,280 180,290 200,280", "200,430 190,470 210,500", "60,90 90,100 110,90", "330,380 360,390 380,420", "50,500 80,510 70,540", "110,340 120,370 100,390"],
    rail: [
      "65,200 120,140 180,90 220,40 250,10",
      "0,300 60,220 150,130 230,50",
      "90,140 130,160 200,90 260,60 300,60",
      "210,120 240,160 330,210 345,230",
      "345,100 390,150 385,200 365,250 355,310 300,350 250,400",
      "420,145 460,170 440,280 420,320",
      "60,90 120,50 170,20",
      "370,210 385,185 400,200 370,210 395,215",
    ],
    primary: [
      "70,70 130,60 200,40 280,30",
      "120,90 180,180 240,250 310,320 350,340",
      "230,100 300,130 330,200 320,260",
      "150,220 200,200 260,170 340,150 400,100",
      "60,280 130,260 180,290 250,310 330,300",
      "160,430 150,500 160,560 150,627",
      "270,380 250,440 240,500 280,560 320,590",
      "340,400 350,450 330,540 290,627",
      "80,300 60,380 40,440 0,460",
      "270,180 330,190 400,210 440,200",
      "440,240 430,320 410,400 400,440",
      "200,250 170,310 120,340 60,350",
      "0,450 50,490 60,560",
      "100,250 120,300 170,330",
      "130,80 160,140 160,190",
      "290,100 350,150 420,120",
      "340,360 320,400 340,430 380,400",
    ],
    trunk: [
      "0,460 60,465 130,455 210,420 260,410",
      "130,455 200,500 270,540 300,585 350,627",
      "0,370 40,430 50,500 50,627",
      "150,180 220,190 300,210 390,225",
      "260,60 300,100 290,180 320,240 370,300",
      "160,60 260,70 350,120 370,160",
      "200,350 260,330 330,320 400,320",
      "250,410 280,370 340,370 360,400",
      "430,160 460,180 440,260 420,340 430,380",
      "320,60 400,90 465,98",
      "60,40 130,100 200,110",
      "180,310 250,370 330,410",
      "260,627 300,590 325,530",
      "60,240 110,210 180,190",
      "370,150 400,170 420,240 460,160",
      "0,340 30,390 50,400",
    ],
    motorway: [
      "0,370 50,310 110,250 170,190 190,120 220,60 250,0",
      "0,320 50,290 70,240 130,235 200,260 300,270 350,265 420,260",
      "285,50 300,80 360,120",
      "180,90 240,90 290,140 330,190 390,180 410,190",
      "398,130 400,200 400,260 395,300 360,340 340,380",
      "410,180 425,200 430,240 410,260",
      "340,380 335,440 325,520 300,590 275,627",
      "0,300 40,270 80,210",
      "290,30 340,20 370,0",
      "50,310 100,240 150,200",
      "0,265 60,260 60,180",
      "370,60 380,100 400,130",
    ],
  },
];

const stripes = [
  { area: "649,49 785,49 760,95 700,130 649,165", n: 260, a: -35, l: 4, seed: 3 },
  { area: "740,100 850,72 850,230 820,290 700,330 649,350 649,300 700,220 649,230 649,200 720,160", n: 2300, a: -33, l: 10, seed: 11 },
  { area: "649,240 850,150 840,230 780,290 700,320 649,350", n: 1500, a: -42, l: 13, seed: 29 },
  { area: "1160,140 1225,80 1340,100 1320,140 1240,200 1230,220 1165,205", n: 1500, a: -30, l: 3, seed: 41 },
  { area: "1221,60 1330,100 1310,140 1290,200 1221,225", n: 1100, a: -20, l: 3, seed: 53 },
  { area: "1225,365 1330,365 1330,440 1225,449", n: 90, a: 0, l: 2, seed: 67 },
  { area: "1245,270 1350,270 1345,345 1245,340", n: 600, a: -20, l: 3, seed: 71 },
];
const greens = [
  { area: "850,60 1060,60 1150,200 1150,330 860,330", n: 420, a: -20, l: 5, seed: 5 },
  { area: "860,180 930,150 930,230 860,280", n: 500, a: -18, l: 8, seed: 9 },
  { area: "1130,49 1221,49 1160,140 1080,120", n: 160, a: -50, l: 5, seed: 13 },
  { area: "1221,60 1340,90 1320,200 1270,240 1330,330 1340,440 1230,449 1200,380 1210,240", n: 2200, a: -25, l: 4, seed: 17 },
  { area: "1440,49 1521,49 1521,80 1440,110", n: 110, a: 30, l: 3, seed: 19 },
  { area: "890,385 935,385 935,430 900,425", n: 420, a: 40, l: 3, seed: 23 },
  { area: "649,380 760,330 990,380 980,449 660,449", n: 130, a: 50, l: 3, seed: 31 },
  { area: "930,120 1010,110 1000,150 930,160", n: 300, a: -15, l: 6, seed: 37 },
  { area: "860,230 1000,190 1000,250 860,260", n: 120, a: -20, l: 4, seed: 43 },
];
const metros = [
  { x: 1160, y: 375, rx: 80, ry: 60, n: 75, seed: 101 },
  { x: 1370, y: 165, rx: 75, ry: 75, n: 80, seed: 103 },
  { x: 1460, y: 185, rx: 60, ry: 22, n: 30, seed: 107 },
  { x: 1300, y: 230, rx: 70, ry: 55, n: 45, seed: 109 },
  { x: 1130, y: 205, rx: 38, ry: 20, n: 14, seed: 113 },
  { x: 1270, y: 110, rx: 60, ry: 50, n: 18, seed: 127 },
  { x: 1335, y: 310, rx: 30, ry: 60, n: 22, seed: 131 },
  { x: 1455, y: 80, rx: 60, ry: 30, n: 20, seed: 137 },
  { x: 1085, y: 430, rx: 28, ry: 20, n: 14, seed: 139 },
];

const shift = (t: Tile) => `translate(${t.x} ${t.y}) scale(0.333333)`;

function Lines({ pick, color, width, jitter = 3, opacity = 1 }: { pick: keyof Tile; color: string; width: number; jitter?: number; opacity?: number }) {
  return (
    <>
      {tiles.map((t, i) => (
        <path key={i} transform={shift(t)} d={((t[pick] as string[] | undefined) ?? []).map((s) => trace(s, jitter)).join("")} fill="none" stroke={color} strokeWidth={width} strokeLinejoin="round" strokeLinecap="round" opacity={opacity} />
      ))}
    </>
  );
}

function Areas({ pick, fill, stroke = "none", width = 0, jitter = 8, opacity = 1 }: { pick: keyof Tile; fill: string; stroke?: string; width?: number; jitter?: number; opacity?: number }) {
  return (
    <>
      {tiles.map((t, i) => (
        <path key={i} transform={shift(t)} d={((t[pick] as string[] | undefined) ?? []).map((s) => trace(s, jitter, true)).join("")} fill={fill} stroke={stroke} strokeWidth={width} opacity={opacity} />
      ))}
    </>
  );
}

type Place = { t: string; x: number; y: number; w?: number; size?: number; kind?: "park" | "state" | "island" };
const places: Place[] = [
  { t: "Wilkes-Barre", x: 999.5, y: 73, w: 59 },
  { t: "Hazleton", x: 989.5, y: 141, w: 41 },
  { t: "Allentown", x: 1080.5, y: 228, w: 47 },
  { t: "Harrisburg", x: 821, y: 308, w: 51 },
  { t: "Lancaster", x: 929, y: 362, w: 46 },
  { t: "York", x: 865, y: 381, w: 21 },
  { t: "Wilmington", x: 1063, y: 432, w: 54 },
  { t: "Philadelphia", x: 1122.5, y: 384, w: 75, size: 13 },
  { t: "New York", x: 1345.5, y: 198, w: 57, size: 13 },
  { t: "Paterson", x: 1319.5, y: 152, w: 42 },
  { t: "Yonkers", x: 1371.5, y: 149, w: 37 },
  { t: "Stamford", x: 1434, y: 119, w: 43 },
  { t: "Bridgeport", x: 1491, y: 92, w: 51 },
  { t: "Huntington", x: 1449.5, y: 164, w: 53 },
  { t: "Long Island", x: 1502, y: 175, w: 67, size: 12.5, kind: "island" },
  { t: "Islip", x: 1506, y: 197, w: 20 },
  { t: "Elizabeth", x: 1312, y: 213, w: 43 },
  { t: "New Brunswick", x: 1253.5, y: 255.5, w: 72 },
  { t: "Trenton", x: 1218, y: 319.5, w: 36.5 },
  { t: "New Jersey", x: 1273.5, y: 344.5, w: 52.5, size: 10.5, kind: "state" },
  { t: "Toms River", x: 1310, y: 382, w: 51 },
  { t: "Pinelands", x: 1233.5, y: 428, w: 51, size: 11.5, kind: "park" },
  { t: "National", x: 1236.5, y: 444.5, w: 45, size: 11.5, kind: "park" },
];
const inks = { park: "#1a6b2f", state: "#8d6594", island: "#222222", city: "#2a2a2a" };

const pins: Pt[] = [
  [1410.3, 84.3], [1355.3, 111.3], [1341.3, 120.3], [1388.3, 135.3], [1373, 160], [1416.3, 159], [1384.3, 162.7], [1339.3, 163.3],
  [1360.3, 165.3], [1131.5, 179], [1313.3, 180.3], [1384.3, 202.3], [1305.3, 219.7], [1348.5, 262], [846.5, 269], [1341.5, 338],
  [1118.5, 347], [1254.5, 348], [1159.3, 349], [1182.5, 391.5],
];

const WATER = "#b5d0d0";

function RoadMap() {
  return (
    <svg className="block h-[400px] w-[872px]" viewBox="649 49 872 400">
      <defs>
        <linearGradient id="pinFill" x1="0" y1="0" x2="0" y2="1">
          <stop offset="0" stopColor="#4593cd" />
          <stop offset="1" stopColor="#126fc6" />
        </linearGradient>
        <linearGradient id="pinEdge" x1="0" y1="0" x2="0" y2="1">
          <stop offset="0" stopColor="#3883b7" />
          <stop offset="1" stopColor="#2e6c97" />
        </linearGradient>
        <filter id="soft" x="-40%" y="-40%" width="180%" height="180%">
          <feGaussianBlur stdDeviation="2.4" />
        </filter>
      </defs>
      <rect x="649" y="49" width="872" height="400" fill="#f2efe9" />
      <Areas pick="forest" fill="#add19e" />
      <Areas pick="clear" fill="#f2efe9" jitter={12} />
      {stripes.map((s) => (
        <path key={s.seed} d={scatter(s.area, s.n, s.a, s.l, s.seed)} stroke="#f2efe9" strokeWidth="0.8" opacity="0.75" />
      ))}
      {greens.map((s) => (
        <path key={s.seed} d={scatter(s.area, s.n, s.a, s.l, s.seed)} stroke="#add19e" strokeWidth="1.1" />
      ))}
      <Areas pick="urban" fill="#dcdad6" />
      <Areas pick="park" fill="#98c98b" stroke="#74b76b" width={4.5} jitter={16} opacity={0.85} />
      <Areas pick="zone" fill="#e58a78" stroke="#ee8f82" width={4} opacity={0.5} />
      {metros.map((m) => (
        <g key={m.seed} fill="none" strokeWidth="0.9" strokeLinejoin="round" opacity="0.85">
          <path d={streets(m.x, m.y, m.rx, m.ry, m.n, m.seed)} stroke="#f8c384" />
          <path d={streets(m.x, m.y, m.rx, m.ry, Math.round(m.n / 3), m.seed + 500)} stroke="#f4a07f" />
        </g>
      ))}

      <g fill={WATER}>
        <path transform="translate(1221 40) scale(0.333333)" d={trace("910,165 840,190 770,220 700,238 650,268 610,300 585,335 560,360 545,395 560,405 590,380 640,350 680,322 710,330 740,345 770,318 830,335 850,345 870,320 910,330", 7, true)} />
        <path transform="translate(1221 40) scale(0.333333)" d={trace("910,470 870,490 850,515 790,510 740,530 660,540 600,545 560,520 530,545 500,560 470,565 455,545 440,500 425,470 405,490 400,520 420,545 400,570 360,590 310,605 360,620 420,640 910,640", 7, true)} />
        <path transform="translate(1221 240) scale(0.333333)" d={trace("320,0 345,25 400,30 430,60 445,85 465,110 462,160 450,240 435,300 425,370 412,440 405,520 395,570 365,640 910,640 910,-10 400,-20", 4, true)} />
        <path transform="translate(1221 240) scale(0.333333)" d={trace("415,365 385,395 375,430 360,460 345,520 350,560 335,600 320,640 370,640 395,560 402,450", 9, true)} />
        <path transform="translate(1221 40) scale(0.333333)" d={trace("470,60 485,50 490,90 520,120 522,180 515,250 502,250 505,190 490,110", 4, true)} />
      </g>
      <path transform="translate(1221 40) scale(0.333333)" d={trace("480,590 560,570 680,560 800,545 850,533 870,520 840,543 700,560 580,576 480,596", 2, true)} fill="#f2efe9" />
      <path transform="translate(1221 240) scale(0.333333)" d={trace("448,40 455,60 460,90 460,120", 2) + trace("408,400 405,500 395,560 360,622", 3)} fill="none" stroke="#f2efe9" strokeWidth="4.5" />
      <path transform="translate(1221 40) scale(0.333333)" d={trace("420,600 428,540 425,490", 3) + trace("440,430 450,480 430,500", 3)} fill="none" stroke={WATER} strokeWidth="9" />
      <path d="M1094,449 L1104,428 1120,412 1140,402 1160,396 1172,390 1182,372 1200,362 1225,340 1240,325" fill="none" stroke="#b5c9d6" strokeWidth="5" strokeLinejoin="round" />

      <Lines pick="stream" color="#aacfd6" width={3} jitter={12} />
      <Lines pick="river" color="#a9cbd0" width={10} />
      <Lines pick="rail" color="#7c7c7c" width={3} jitter={4} />
      <Lines pick="primary" color="#f8c384" width={3.5} />
      <Lines pick="trunk" color="#f4a07f" width={3.6} />
      <Lines pick="motorway" color="#e5718c" width={4.1} />

      <g fill="none" stroke="#b784c9" strokeWidth="1" opacity="0.65">
        <path d="M649,433.5 H1049 V425 L1068,410" strokeDasharray="5 3" />
        <path d="M1252,49 L1290,72 1340,98 1375,125 1385,135" strokeDasharray="6 3" />
        <path d="M1425,105 L1440,140 1521,119 M1438,98 L1455,88 1480,75" strokeDasharray="4 3" />
        <path d="M1345,253 L1375,243 1386,250 1388,282 1382,320 1374,360 1367,425 1355,449 M1386,250 L1410,241 1450,240" strokeDasharray="4 3" />
        <path d="M1364,232 L1365,196 M1364,240 L1364,260" stroke="#7b90d8" strokeDasharray="4 2" />
        <path d="M1185,110 Q1208,85 1222,50" stroke="#8e8bb5" strokeDasharray="3 4" />
      </g>
      <path d="M1396,449 L1401,436 1404,395 1413,350 1423,302 1424.5,276.5 L1445,278.5 Q1458,278 1470,273 L1495,267 1521,265" fill="none" stroke="#ab91c3" strokeWidth="1.8" />

      {places.map((p) => (
        <text
          key={p.t}
          x={p.x}
          y={p.y}
          textLength={p.w}
          lengthAdjust="spacingAndGlyphs"
          fontSize={p.size ?? 10.3}
          fontStyle={p.kind ? "italic" : "normal"}
          fill={inks[p.kind ?? "city"]}
          stroke="#ffffff"
          strokeOpacity="0.7"
          strokeWidth="2.4"
          strokeLinejoin="round"
          paintOrder="stroke"
          fontFamily='"Noto Sans", sans-serif'
        >
          {p.t}
        </text>
      ))}

      {pins.map(([x, y], i) => (
        <path key={i} d={`M${x},${y + 27} L${x + 7},${y + 4} Q${x + 20},${y - 2} ${x + 22},${y + 8} Q${x + 20},${y + 18} ${x},${y + 28}Z`} fill="#000000" opacity="0.24" filter="url(#soft)" />
      ))}
      {pins.map(([x, y], i) => (
        <g key={i} transform={`translate(${x - 12.5} ${y - 12.5})`}>
          <path d="M12.5,0.5 C5.8,0.5 0.5,6 0.5,12.4 C0.5,15.3 2,18.2 2.9,20.2 L12.5,40 L22.1,20.2 C23,18.2 24.5,15.3 24.5,12.4 C24.5,6 19.2,0.5 12.5,0.5Z" fill="url(#pinFill)" stroke="url(#pinEdge)" />
          <path d="M12.5,1.6 C6.5,1.6 1.6,6.6 1.6,12.4 C1.6,15 3,17.8 3.9,19.7 L12.5,37.5 L21.1,19.7 C22,17.8 23.4,15 23.4,12.4 C23.4,6.6 18.5,1.6 12.5,1.6Z" fill="none" stroke="#ffffff" strokeOpacity="0.12" />
          <circle cx="12.5" cy="12.5" r="4.2" fill="#ffffff" stroke="#2f7cb8" strokeWidth="0.7" />
        </g>
      ))}
    </svg>
  );
}

function Choice({ label, round, on }: { label: string; round?: boolean; on?: boolean }) {
  return (
    <label className="flex h-5 items-center gap-2">
      <span
        className={
          round
            ? "flex size-3 items-center justify-center rounded-full border border-[#a9a9a9] bg-linear-to-b from-[#e8e8e8] to-[#dcdcdc]"
            : "flex size-3 items-center justify-center rounded-[2px] border border-[#a6a6a6] bg-linear-to-b from-[#e8e8e8] to-[#dcdcdc] shadow-[0_1px_0_rgba(0,0,0,0.08)]"
        }
      >
        {on && round && <span className="size-1.5 rounded-full bg-[#5a5a5a]" />}
        {on && !round && (
          <svg className="size-[10px] shrink-0" viewBox="0 0 10 10">
            <path d="M1.6,5.2 L4,7.6 L8.6,1.6" fill="none" stroke="#3c3c3c" strokeWidth="2.1" />
          </svg>
        )}
      </span>
      <span className={round ? "whitespace-nowrap tracking-[0.18px]" : "whitespace-nowrap tracking-[0.06px]"}>{label}</span>
    </label>
  );
}

function DebtSlider() {
  const labels = ["0", "5,000", "10,000", "15,000", "20,000", "25,000", "30,000", "35,000", "40,000", "45,000", "50,000"];
  return (
    <div className="mt-[5px] h-[75px]">
      <div className="-mr-2 flex h-4 items-start justify-between">
        <span className="flex h-[15px] w-3 items-center justify-center rounded-[3px] bg-[#dfdfdf] text-[10px] leading-none text-[#333333]">0</span>
        <span className="flex h-4 w-[39px] items-center justify-center rounded-[3px] bg-[#428bca] text-[11px] leading-none font-bold text-white">50,000</span>
      </div>
      <div className="relative mt-[9px] h-2 rounded-l-[4px] rounded-r-[4px] bg-[#428bca]">
        <span className="absolute -top-2 right-0 z-10 size-[22px] rounded-full border border-[#a9a9a9] bg-[#dddddd] shadow-[1px_1px_3px_rgba(0,0,0,0.35)]" />
      </div>
      <div className="ml-[10px] flex h-2 w-[549px] justify-between">
        {Array.from({ length: 31 }, (_, i) => (
          <span key={i} className={i % 3 === 0 ? "h-2 w-px bg-[#8db8dd]" : "h-1 w-px bg-[#b5b5b5]"} />
        ))}
      </div>
      <div className="mt-[3px] -ml-[17px] grid w-[604px] grid-cols-11 text-center text-[9px] leading-[12px] tracking-[0.05px] text-[#999999]">
        {labels.map((l) => (
          <span key={l}>{l}</span>
        ))}
      </div>
    </div>
  );
}

export default function App() {
  return (
    <main className="h-[692px] w-[1521px] overflow-hidden bg-white text-[14px] leading-5 text-[#333333] [font-family:'Liberation_Sans',Arial,sans-serif]">
      <h1 className="h-[49px] pt-[6px] pl-[9px] text-[30px] leading-[33px]">College Selector</h1>
      <div className="flex gap-[30px] pl-[9px]">
        <section className="h-[619px] w-[610px] shrink-0 rounded-[4px] border border-[#e3e3e3] bg-[#f5f5f5] px-[19px] pt-6 shadow-[inset_0_1px_1px_rgba(0,0,0,0.05)]">
          <p className="tracking-[0.08px] text-[#777777]">Select Colleges and Universities Based Upon Selected Criteria</p>
          <h2 className="mt-[10px] font-bold tracking-[0.25px]">Type of Institution</h2>
          <div className="mt-[5px] flex h-[34px] items-center justify-between rounded-[4px] border border-[#cccccc] bg-white pr-[17px] pl-3">
            <span>Public</span>
            <svg className="h-[5px] w-[10px]" viewBox="0 0 10 5">
              <path d="M0,0 H10 L5,5Z" fill="#333333" />
            </svg>
          </div>
          <h2 className="mt-5 font-bold tracking-[0.12px]">Predominate Degree Awarded</h2>
          <div className="mt-[5px] flex flex-col gap-[5px]">
            <Choice label="Graduate" />
            <Choice label="Bachelor" />
            <Choice label="Associate" on />
            <Choice label="Certificate" />
          </div>
          <h2 className="mt-[15px] font-bold tracking-[0.25px]">Student Population:</h2>
          <div className="mt-[5px] flex flex-col gap-[5px]">
            <Choice round label="All" />
            <Choice round label="Small (less than 1000)" />
            <Choice round label="Medium (1001 - 7,500)" />
            <Choice round label="Large (7,500 - 20,000)" on />
            <Choice round label="Very Large (greater than 20,000)" />
          </div>
          <h2 className="mt-[15px] font-bold tracking-[0.22px]">Median Student Debt At Completion</h2>
          <DebtSlider />
          <div className="flex flex-col gap-[15px]">
            <Choice label="Only Historically Black Colleges and Universities" />
            <Choice label="Only Predominately Black Institutions" />
          </div>
        </section>
        <section className="relative h-[400px] w-[872px] shrink-0 overflow-hidden">
          <RoadMap />
          <div className="absolute top-[10px] left-[10px] h-[52px] w-[26px] rounded-[4px] bg-white shadow-[0_1px_5px_rgba(0,0,0,0.65)]">
            <button className="flex h-[26px] w-full items-center justify-center border-b border-[#cccccc]" aria-label="Zoom in">
              <svg className="size-[10px]" viewBox="0 0 10 10">
                <path d="M0,5 H10 M5,0 V10" stroke="#000000" strokeWidth="2" />
              </svg>
            </button>
            <button className="flex h-[26px] w-full items-center justify-center" aria-label="Zoom out">
              <svg className="size-[10px]" viewBox="0 0 10 10">
                <path d="M0.5,5 H9.5" stroke="#000000" strokeWidth="2" />
              </svg>
            </button>
          </div>
          <div className="absolute top-[187px] left-[346px] h-[92px] w-[247px]">
            <span className="absolute top-[83px] left-[115px] size-[17px] rotate-45 bg-white shadow-[0_3px_14px_rgba(0,0,0,0.4)]" />
            <div className="relative h-[92px] rounded-[12px] bg-white shadow-[0_3px_14px_rgba(0,0,0,0.4)]" />
            <span className="absolute top-[82px] left-[115px] size-[17px] rotate-45 bg-white" />
            <div className="absolute inset-0 flex flex-col pt-[14px] pl-5 text-[12px] leading-4 whitespace-nowrap">
              <span className="tracking-[0.19px]">Delaware County Community College</span>
              <span className="tracking-[0.1px]">Media, PA</span>
              <a className="tracking-[0.08px] text-[#0078a8]">Official Site</a>
              <a className="tracking-[0.12px] text-[#0078a8]">Net Price Calculator</a>
            </div>
            <svg className="absolute top-[7px] left-[231px] size-[10px]" viewBox="0 0 9 9">
              <path d="M0.8,0.8 L8.2,8.2 M8.2,0.8 L0.8,8.2" stroke="#c3c3c3" strokeWidth="2.2" />
            </svg>
          </div>
        </section>
      </div>
    </main>
  );
}
